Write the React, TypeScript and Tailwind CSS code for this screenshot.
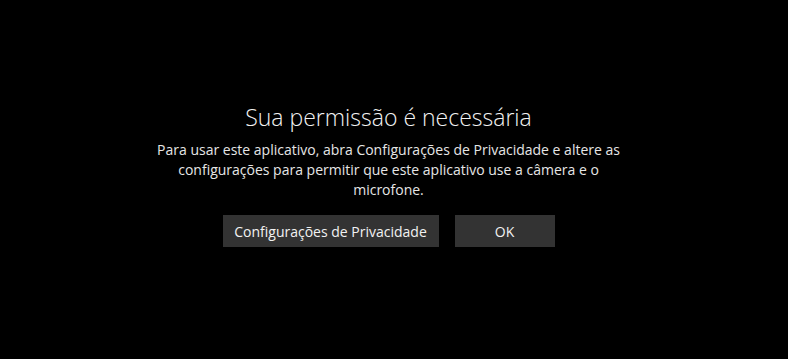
export default function App() {
  return (
    <div className="w-full h-[359px] bg-black flex flex-col items-center pt-[100px] pr-[11px] text-white" style={{ fontFamily: '"Open Sans", "Noto Sans", sans-serif' }}>
      <h1 className="text-[23px] font-light leading-[34px] text-[#f2f2f2]">Sua permissão é necessária</h1>
      <p className="mt-[6px] w-[485px] text-center text-[14px] leading-[20px] text-[#e6e6e6]">
        Para usar este aplicativo, abra Configurações de Privacidade e altere as configurações para permitir que este aplicativo use a câmera e o microfone.
      </p>
      <div className="mt-[15px] flex gap-4">
        <button className="w-[216px] h-[32px] bg-[#333333] text-[14px] text-[#f2f2f2]">Configurações de Privacidade</button>
        <button className="w-[100px] h-[32px] bg-[#333333] text-[14px] text-[#f2f2f2]">OK</button>
      </div>
    </div>
  );
}
